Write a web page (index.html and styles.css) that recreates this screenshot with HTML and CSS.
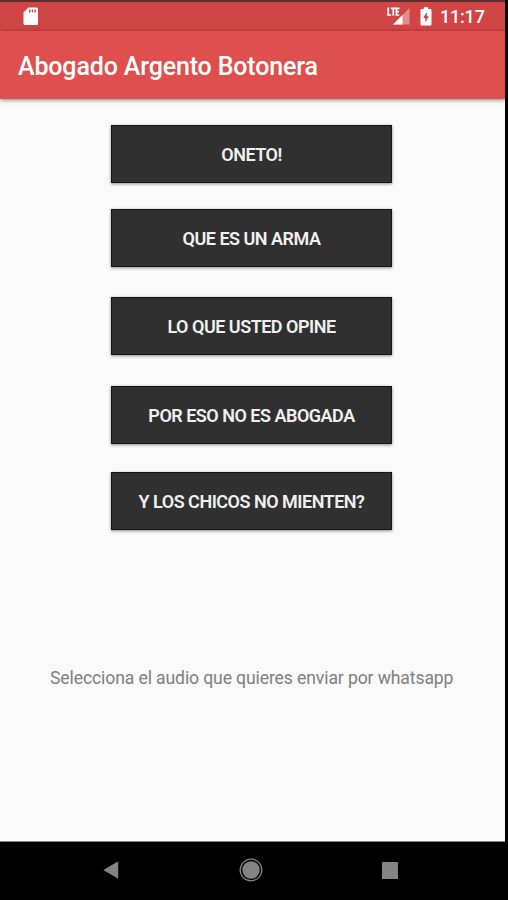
FILE: index.html
```html
<!DOCTYPE html>
<html lang="es">
<head>
  <meta charset="UTF-8" />
  <meta name="viewport" content="width=device-width, initial-scale=1.0" />
  <title>Abogado Argento Botonera</title>
  <link rel="stylesheet" href="styles.css">
</head>
<body>
  <div class="screen">
    <div class="status-bar">
      <svg class="sd-icon" width="16" height="19" viewBox="0 0 16 19">
        <path fill="#fff" d="M5.5 0.5H13.5Q15 0.5 15 2V16.5Q15 18 13.5 18H2Q0.5 18 0.5 16.5V5.5Z" />
        <path stroke="#d14545" stroke-width="1.4" d="M6.7 2.5V5.5M9.4 2.5V5.5M12.1 2.5V5.5" />
      </svg>
      <div class="status-right">
        <svg class="signal-icon" width="24" height="19" viewBox="0 0 24 19">
          <path fill="#e58d8d" d="M22.5 1V17.5H6Z" />
          <path fill="#fff" d="M15.5 8V17.5H6Z" />
          <path fill="none" stroke="#fff" stroke-width="1.7" d="M1.2 0.5V8H4.2M3.8 1.4H8.6M6.3 1.4V8.8M12.4 1.4H9.4V8H12.2M9.4 4.7H12" />
        </svg>
        <svg class="battery-icon" width="12" height="19" viewBox="0 0 12 19">
          <path fill="#fff" d="M3.8 0.3H8.2V2H10.2Q11.5 2 11.5 3.3V17.2Q11.5 18.5 10.2 18.5H1.8Q0.5 18.5 0.5 17.2V3.3Q0.5 2 1.8 2H3.8Z" />
          <path fill="#d14545" d="M6.9 5L3.2 11H5.3V15.3L8.9 9.3H6.9Z" />
        </svg>
        <span class="clock">11:17</span>
      </div>
    </div>

    <header class="app-bar">
      <h1>Abogado Argento Botonera</h1>
    </header>

    <main>
      <ul class="sounds">
        <li><button class="oneto">ONETO!</button></li>
        <li><button class="arma">QUE ES UN ARMA</button></li>
        <li><button class="opine">LO QUE USTED OPINE</button></li>
        <li><button class="abogada">POR ESO NO ES ABOGADA</button></li>
        <li><button class="chicos">Y LOS CHICOS NO MIENTEN?</button></li>
      </ul>
      <p class="hint">Selecciona el audio que quieres enviar por whatsapp</p>
    </main>
  </div>

  <nav class="nav-bar">
    <svg width="16" height="18" viewBox="0 0 16 18">
      <path fill="#848484" d="M0.3 9L15.2 0.2V17.8Z" />
    </svg>
    <svg width="24" height="24" viewBox="0 0 24 24">
      <circle cx="12" cy="12" r="10.8" fill="none" stroke="#848484" stroke-width="1.3" />
      <circle cx="12" cy="12" r="8.7" fill="#848484" />
    </svg>
    <svg width="16" height="17" viewBox="0 0 16 17">
      <rect width="16" height="17" rx="0.6" fill="#848484" />
    </svg>
  </nav>
</body>
</html>
```

FILE: styles.css
```css
* {
  box-sizing: border-box;
}

body {
  margin: 0;
  height: 900px;
  overflow: hidden;
  background: #000;
  font-family: Roboto, "Liberation Sans", sans-serif;
}

.screen {
  display: flex;
  flex-direction: column;
  width: 505px;
  height: 842px;
  background: #fafafa;
  border-bottom: 1px solid #8a8a8a;
}

.status-bar {
  display: flex;
  justify-content: space-between;
  height: 31px;
  padding: 5px 20px 0 23px;
  border-top: 2px solid #5f2b2e;
  background: #d14545;
}

.status-right {
  display: flex;
  color: #fff;
}

.battery-icon {
  margin-left: 9px;
}

.clock {
  margin-left: 8px;
  width: 45px;
  font-size: 18px;
  line-height: 20px;
  font-weight: 500;
  letter-spacing: -0.2px;
  white-space: nowrap;
}

.app-bar {
  height: 68px;
  padding-left: 18px;
  background: #df4f4e;
  box-shadow: 0 1px 4px rgba(0, 0, 0, 0.5);
}

h1 {
  margin: 0;
  color: #fff;
  font-size: 25px;
  line-height: 71px;
  font-weight: 500;
  letter-spacing: -0.15px;
}

.sounds {
  list-style: none;
  width: 281px;
  margin: 26px 0 0 111px;
  padding: 0;
}

button {
  display: block;
  width: 100%;
  height: 58px;
  padding: 0;
  border: 1px solid #151515;
  background: #303030;
  box-shadow: 0 1px 3px rgba(0, 0, 0, 0.45);
  color: #f0f0f0;
  font-family: inherit;
  font-size: 18px;
  font-weight: 600;
  letter-spacing: -0.5px;
}

.arma {
  margin-top: 26px;
}

.opine {
  margin-top: 30px;
}

.abogada {
  margin-top: 31px;
}

.chicos {
  margin-top: 28px;
}

.hint {
  margin: 136px 0 0 50px;
  color: #808080;
  font-size: 17.6px;
  line-height: 24px;
  letter-spacing: -0.12px;
  white-space: nowrap;
}

.nav-bar {
  display: flex;
  align-items: center;
  justify-content: space-between;
  width: 295px;
  height: 56px;
  margin-left: 103px;
}
```
